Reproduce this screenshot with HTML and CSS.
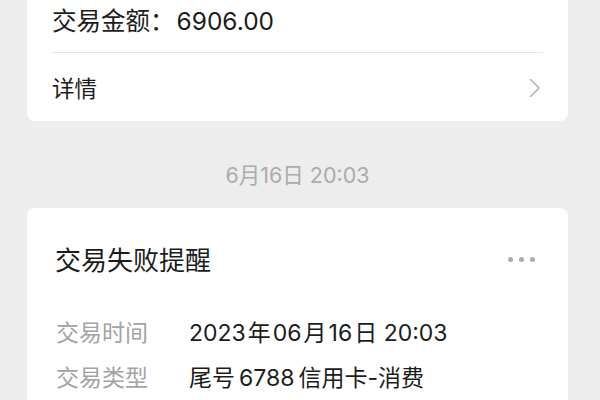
FILE: index.html
```html
<!DOCTYPE html>
<html lang="zh-CN">
<head>
<meta charset="utf-8">
<link rel="stylesheet" href="styles.css">
</head>
<body>
<div class="feed">
  <div class="card card-top">
    <div class="amount">交易金额：<span class="n0">6906.00</span></div>
    <div class="divider"></div>
    <div class="detail-row">
      <span>详情</span>
      <svg class="chevron" width="12" height="20" viewBox="0 0 12 20"><path d="M1.5 1.5 L10 10 L1.5 18.5" fill="none" stroke="#b4b4b4" stroke-width="1.6" stroke-linecap="round" stroke-linejoin="round"/></svg>
    </div>
  </div>
  <div class="stamp">6月16日 20:03</div>
  <div class="card card-msg">
    <div class="msg-head">
      <span class="title">交易失败提醒</span>
      <span class="dots"><i></i><i></i><i></i></span>
    </div>
    <div class="rows">
      <span class="label">交易时间</span><span class="value"><span class="n lead">2023</span>年<span class="n">06</span>月<span class="n">16</span>日 20:03</span>
      <span class="label">交易类型</span><span class="value">尾号<span class="n wide">6788</span>信用卡-消费</span>
    </div>
  </div>
</div>
</body>
</html>
```
FILE: styles.css
```css
* { box-sizing: border-box; }
html, body { margin: 0; padding: 0; }
body {
  width: 600px;
  height: 400px;
  overflow: hidden;
  background: #ededed;
  font-family: Inter, "Noto Sans CJK SC", sans-serif;
  color: #1c1c1c;
}
.feed {
  padding: 0 32px 0 27px;
}
.card {
  background: #ffffff;
  border-radius: 8px;
}
.card-top {
  margin-top: -12px;
  padding: 12px 25px 0 24px;
}
.amount {
  height: 42px;
  line-height: 42px;
  font-size: 24.5px;
  padding-left: 1px;
}
.n0 { margin-left: 2px; }
.divider {
  margin-top: 10px;
  height: 1px;
  background: #e8e8e8;
}
.detail-row {
  height: 68px;
  display: flex;
  align-items: center;
  justify-content: space-between;
  font-size: 22.5px;
  padding-left: 1px;
}
.chevron {
  margin-right: 2px;
  margin-top: 2px;
}
.stamp {
  padding: 42px 0 21px;
  line-height: 24px;
  text-align: center;
  font-size: 21.5px;
  color: #ababab;
}
.card-msg {
  padding: 38px 33px 20px 28px;
  height: 260px;
}
.msg-head {
  display: flex;
  justify-content: space-between;
  align-items: center;
  height: 30px;
}
.title {
  font-size: 26px;
  line-height: 30px;
}
.dots {
  display: flex;
  gap: 6px;
  margin-top: -4px;
}
.dots i {
  width: 5px;
  height: 5px;
  border-radius: 50%;
  background: #ababab;
}
.rows {
  margin-top: 32px;
  padding-left: 1px;
  display: grid;
  grid-template-columns: 133px 1fr;
  grid-auto-rows: 45px;
  align-items: center;
  font-size: 23px;
}
.label { color: #a3a3a3; }
.value { color: #1c1c1c; white-space: nowrap; }
.n { margin: 0 2px; }
.n.lead { margin-left: 0; }
.n.wide { margin: 0 4px; }
```
